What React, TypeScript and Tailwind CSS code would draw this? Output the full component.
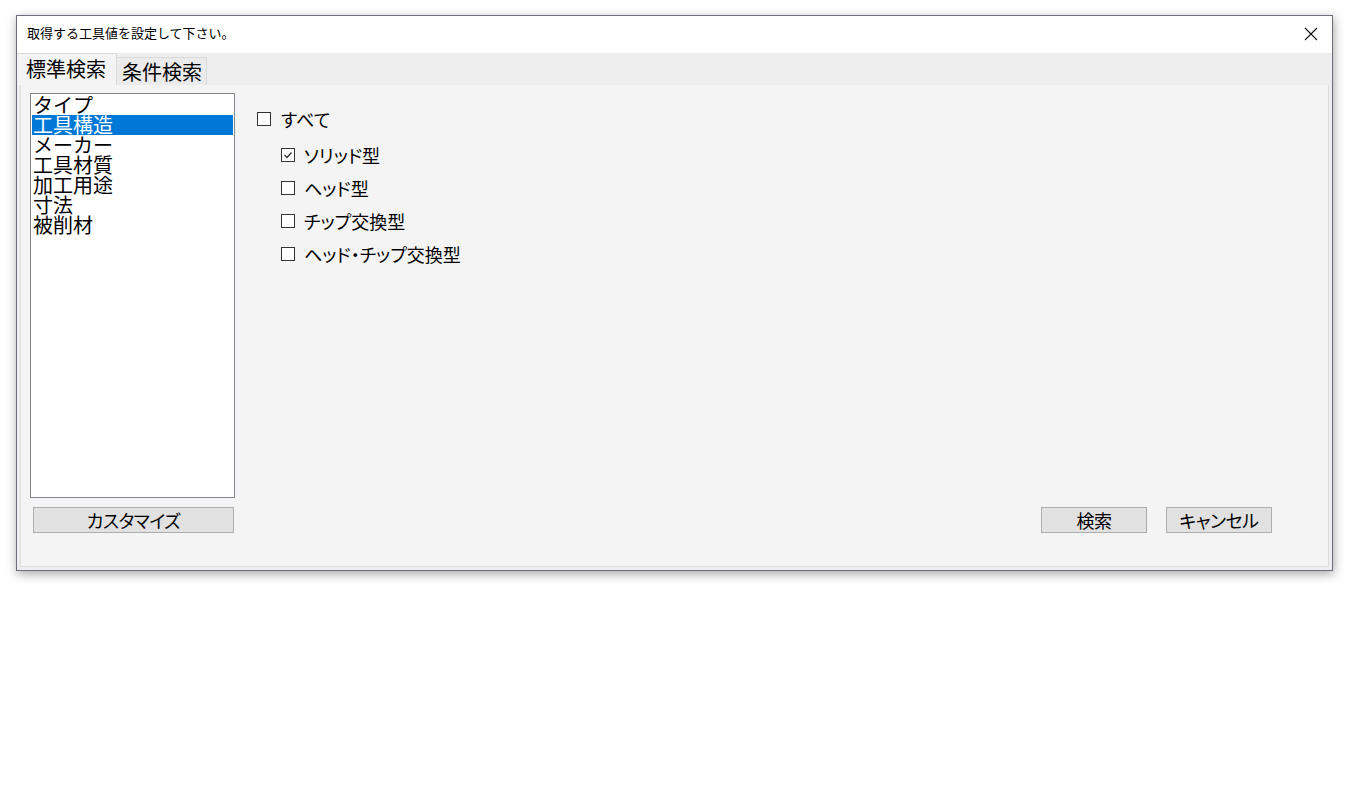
import React from "react";

const font = "font-['Noto_Sans_CJK_JP','Noto_Sans_CJK_SC',sans-serif]";

const listItems = ["タイプ", "工具構造", "メーカー", "工具材質", "加工用途", "寸法", "被削材"];

const subOptions = [
  { label: "ソリッド型", checked: true },
  { label: "ヘッド型", checked: false },
  { label: "チップ交換型", checked: false },
  { label: "ヘッド・チップ交換型", checked: false },
];

function CheckBox({ checked }: { checked?: boolean }) {
  return (
    <span className="w-[14px] h-[14px] border border-[#333333] bg-white flex items-center justify-center shrink-0">
      {checked && (
        <svg width="10" height="10" viewBox="0 0 10 10">
          <path d="M1.5 5 L4 7.5 L8.5 2.5" fill="none" stroke="#333" strokeWidth="1.3" />
        </svg>
      )}
    </span>
  );
}

function WinButton({ label, className }: { label: string; className?: string }) {
  return (
    <button
      className={`h-[26px] bg-[#e1e1e1] border border-[#adadad] text-[18px] leading-none tracking-[-0.5px] text-black [font-feature-settings:'palt'] flex items-center justify-center ${className ?? ""}`}
    >
      {label}
    </button>
  );
}

export default function App() {
  return (
    <div className={`w-[1350px] h-[800px] bg-white pt-[15px] pl-[16px] ${font}`}>
      <div className="w-[1317px] h-[556px] border border-[#6e6e7a] bg-[#eeeeee] shadow-[1px_3px_10px_rgba(0,0,0,0.35)] flex flex-col">
        {/* title bar */}
        <div className="h-[37px] bg-white flex items-center justify-between pl-[10px] pr-[14px] shrink-0">
          <span className="text-[13px] leading-none text-black pb-[4px]">取得する工具値を設定して下さい。</span>
          <svg width="14" height="14" viewBox="0 0 14 14" className="mb-[2px]">
            <path d="M1 1 L13 13 M13 1 L1 13" stroke="#111" strokeWidth="1.1" />
          </svg>
        </div>

        {/* tabs */}
        <div className="h-[32px] flex items-end shrink-0">
          <div className="h-[32px] w-[100px] bg-[#f4f4f4] border-t border-r border-[#dadada] flex items-center pl-[9px] pb-[1px] text-[20px] leading-none text-black">
            標準検索
          </div>
          <div className="h-[28px] w-[90px] bg-[#ebebeb] border-t border-r border-[#d9d9d9] flex items-center pl-[5px] text-[20px] leading-none text-black">
            条件検索
          </div>
        </div>

        {/* panel */}
        <div className="flex-1 mx-[3px] mb-[3px] bg-[#f4f4f4] border border-[#dcdcdc] border-t-0 flex flex-col pl-[9px] pt-[8px]">
          <div className="flex">
            <div className="w-[205px] h-[405px] bg-white border border-[#828790] pt-[1px] text-[20px] leading-[20px] text-black">
              {listItems.map((item, i) => (
                <div
                  key={item}
                  className={`h-[20px] mx-[1px] pl-[1px] whitespace-nowrap ${i === 1 ? "bg-[#0078d7] text-white" : ""}`}
                >
                  {item}
                </div>
              ))}
            </div>

            <div className="ml-[22px] mt-[16px] flex flex-col text-[18px] leading-none text-black [font-feature-settings:'palt']">
              <div className="h-[20px] flex items-center gap-[10px]">
                <CheckBox />
                <span>すべて</span>
              </div>
              <div className="ml-[24px] mt-[16px] flex flex-col gap-[13px]">
                {subOptions.map((o) => (
                  <div key={o.label} className="h-[20px] flex items-center gap-[9px]">
                    <CheckBox checked={o.checked} />
                    <span>{o.label}</span>
                  </div>
                ))}
              </div>
            </div>
          </div>

          <div className="mt-[9px] flex items-start justify-between pr-[56px]">
            <WinButton label="カスタマイズ" className="ml-[3px] w-[201px]" />
            <div className="flex gap-[19px]">
              <WinButton label="検索" className="w-[106px]" />
              <WinButton label="キャンセル" className="w-[106px]" />
            </div>
          </div>
        </div>
      </div>
    </div>
  );
}
